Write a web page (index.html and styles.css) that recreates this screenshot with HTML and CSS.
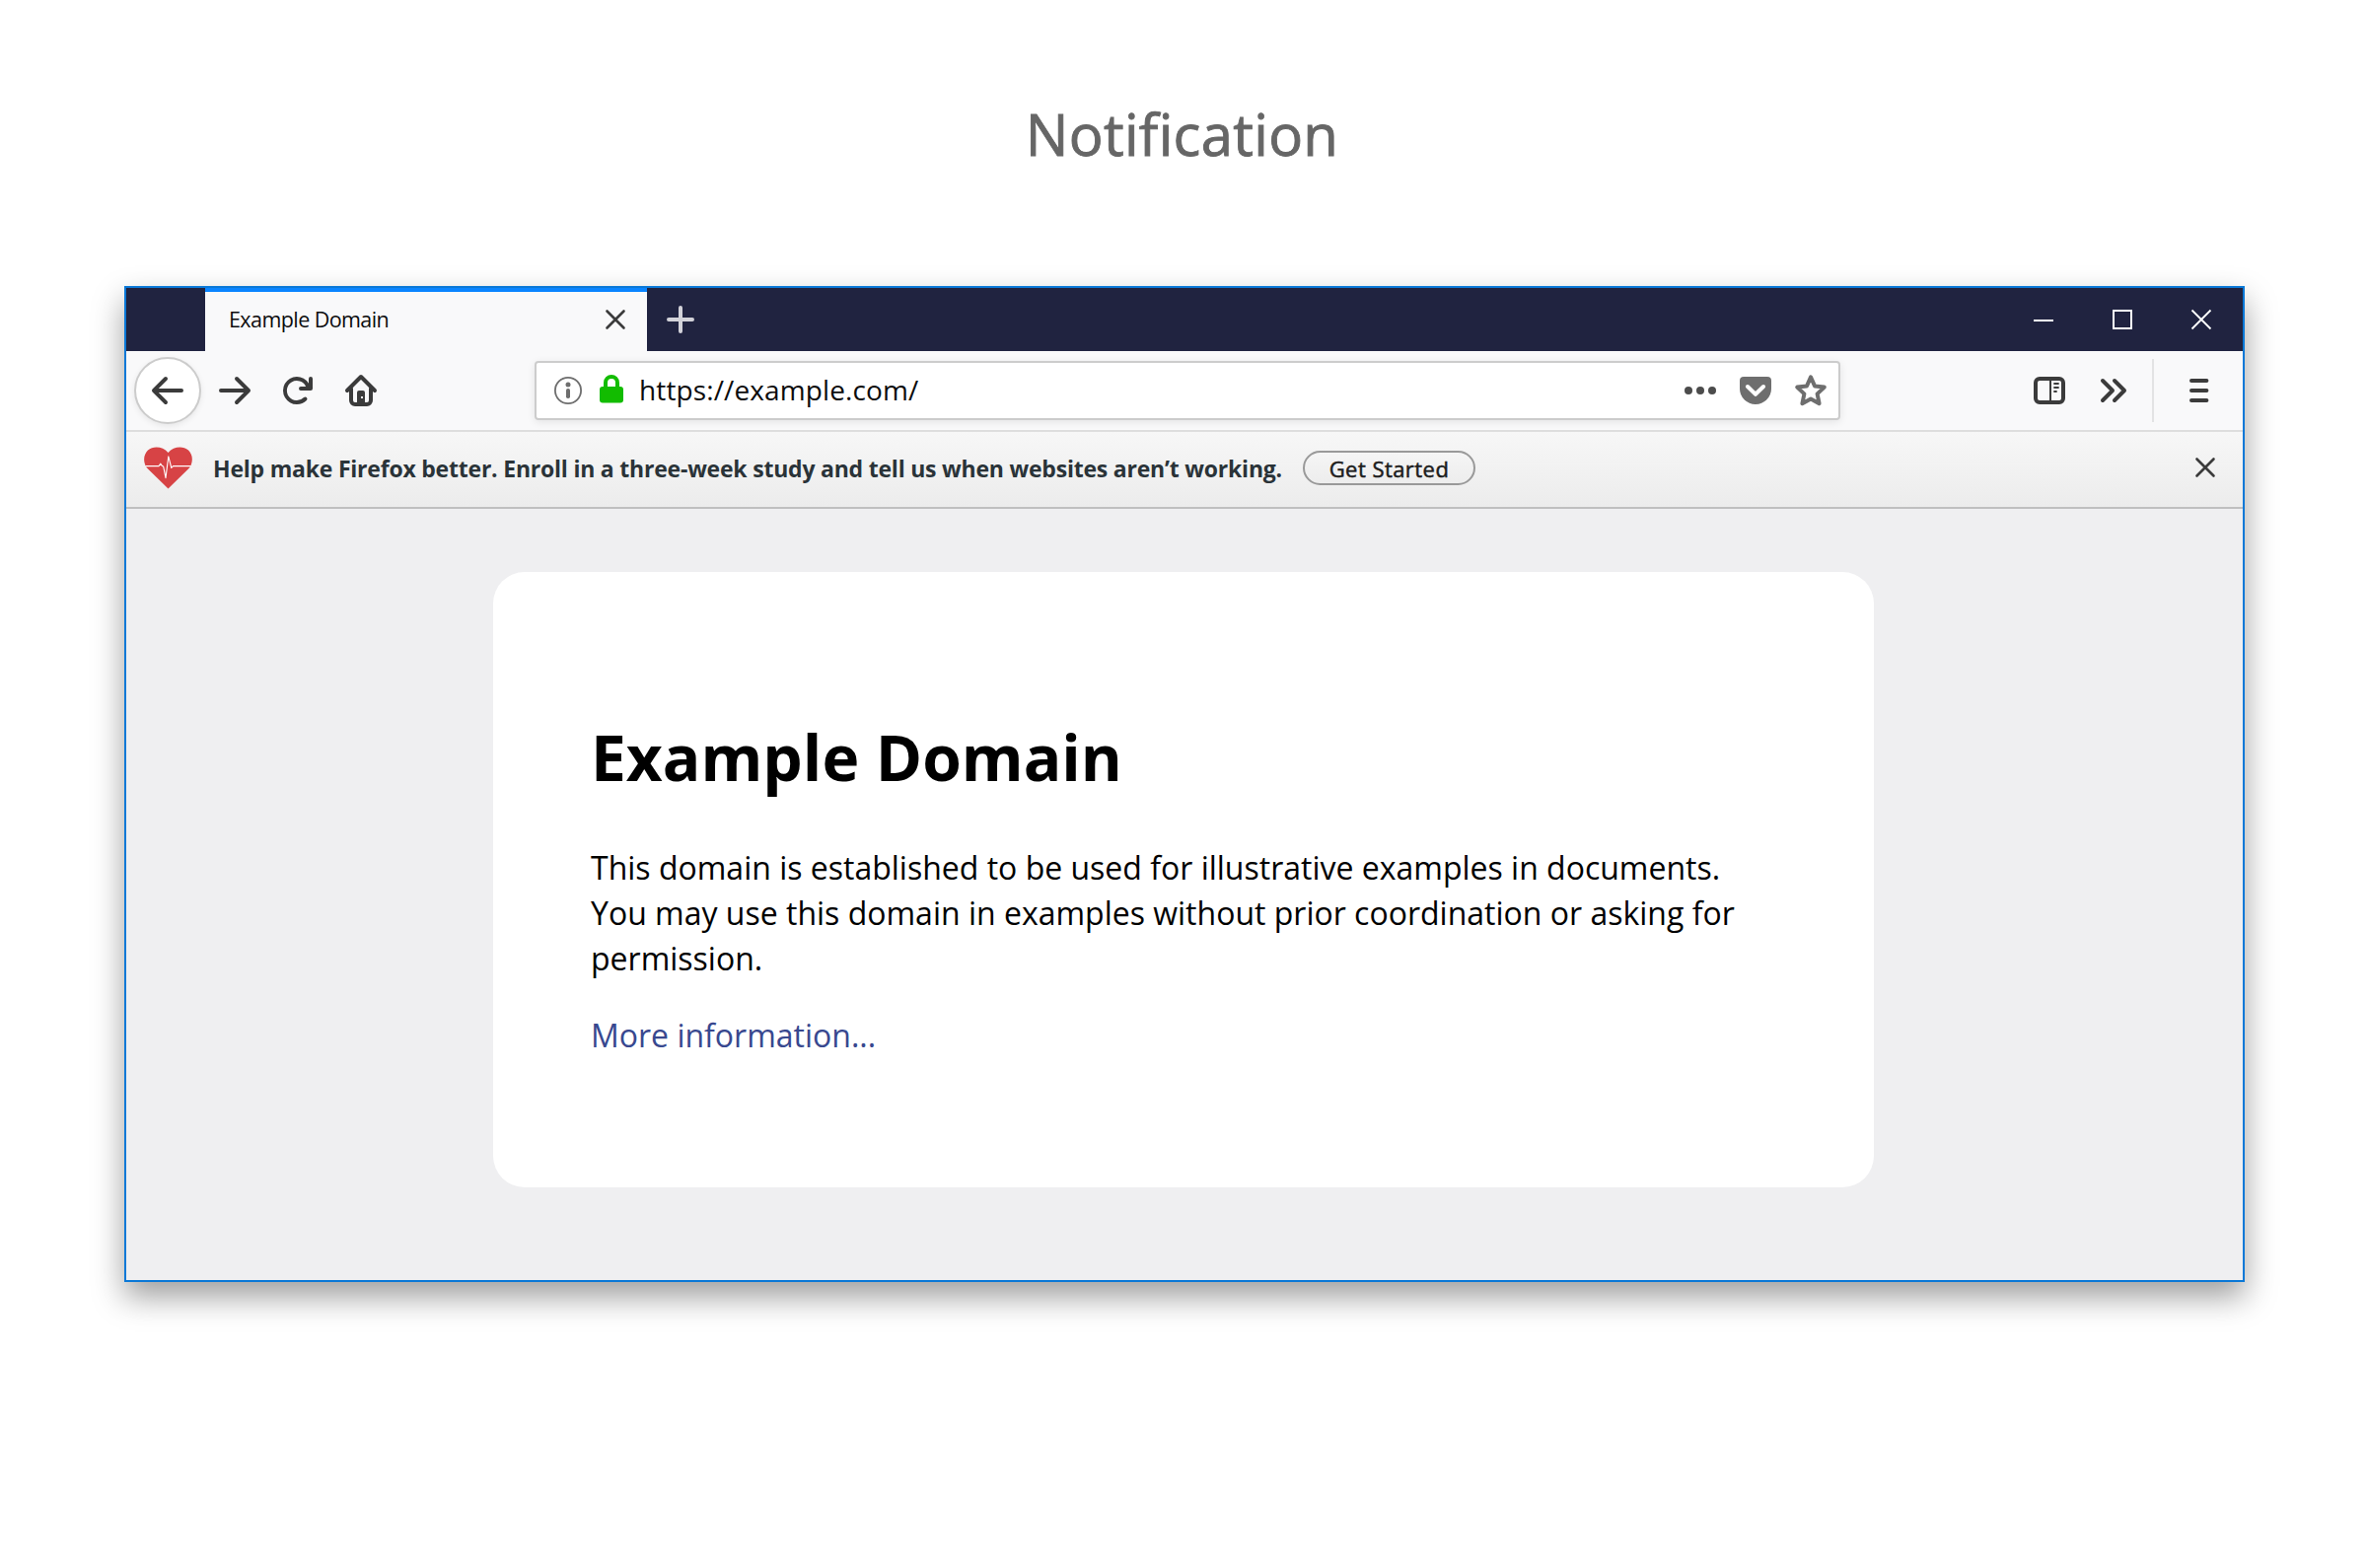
FILE: index.html
```html
<!DOCTYPE html>
<html lang="en">
<head>
<meta charset="utf-8">
<title>Notification</title>
<link rel="stylesheet" href="styles.css">
</head>
<body>
<header class="page-header"><h1 class="page-title">Notification</h1></header>
<main class="window">
  <div class="titlebar">
    <div class="tab">
      <span class="tab-label">Example Domain</span>
      <svg class="icon-close" viewBox="0 0 20 20"><path d="M1.5 1.5l17 17M18.5 1.5l-17 17"/></svg>
    </div>
    <svg class="new-tab" viewBox="0 0 28 28"><path d="M14 2v24M2 14h24"/></svg>
    <div class="window-controls">
      <svg viewBox="0 0 20 20"><path d="M0 11h20"/></svg>
      <svg viewBox="0 0 20 20"><path d="M1 1h18v18H1z"/></svg>
      <svg viewBox="0 0 20 20"><path d="M.5.5l19 19M19.5.5l-19 19"/></svg>
    </div>
  </div>
  <nav class="toolbar">
    <div class="back-button"><svg class="icon" viewBox="0 0 16 16"><path d="M15 7H3.414l4.293-4.293a1 1 0 0 0-1.414-1.414l-6 6a1 1 0 0 0 0 1.414l6 6a1 1 0 0 0 1.414-1.414L3.414 9H15a1 1 0 0 0 0-2z"/></svg></div>
    <div class="nav-icons">
      <svg class="icon" viewBox="0 0 16 16"><path d="M1 7h11.586L8.293 2.707a1 1 0 0 1 1.414-1.414l6 6a1 1 0 0 1 0 1.414l-6 6a1 1 0 0 1-1.414-1.414L12.586 9H1a1 1 0 0 1 0-2z"/></svg>
      <svg class="icon" viewBox=".5 0 16 16"><path d="M15 1a1 1 0 0 0-1 1v2.418A6.995 6.995 0 1 0 8 15a6.954 6.954 0 0 0 4.95-2.05 1 1 0 0 0-1.414-1.414A5.019 5.019 0 1 1 12.549 6H10a1 1 0 0 0 0 2h5a1 1 0 0 0 1-1V2a1 1 0 0 0-1-1z"/></svg>
      <svg class="icon" viewBox="0 0 16 16"><path class="line" d="M1 8l7-7 7 7M3 7v6a2 2 0 0 0 2 2h6a2 2 0 0 0 2-2V7"/><path fill-rule="evenodd" d="M7 8h2a1 1 0 0 1 1 1v6H6V9a1 1 0 0 1 1-1zm1 3v1h1v-1z"/></svg>
    </div>
    <div class="urlbar">
      <svg class="icon-info" viewBox="0 0 28 28"><circle cx="14" cy="14" r="13.1"/><circle class="solid" cx="14" cy="8" r="2.5"/><rect class="solid" x="12" y="12" width="4" height="10" rx="1.8"/></svg>
      <svg class="icon-lock" viewBox="0 0 24 29"><path class="shackle" d="M6 14V8a6 6 0 0 1 12 0v6"/><rect y="12" width="24" height="16.5" rx="3"/></svg>
      <span class="url">https://example.com/</span>
      <div class="page-actions">
        <svg class="icon dots" viewBox="0 0 16 16"><circle cx="2" cy="8" r="2"/><circle cx="8" cy="8" r="2"/><circle cx="14" cy="8" r="2"/></svg>
        <svg class="icon" viewBox="0 0 16 16"><path d="M2 1h12a2 2 0 0 1 2 2v4a8 8 0 0 1-16 0V3a2 2 0 0 1 2-2z"/><path class="check" d="M4 6l4 3.9L12 6"/></svg>
        <svg class="icon" viewBox="0 0 16 16"><path class="line" d="M8 1.2l2 4.5 4.9.6-3.6 3.4 1 4.9L8 12.2l-4.3 2.4 1-4.9-3.6-3.4L6 5.7z"/></svg>
      </div>
    </div>
    <div class="tools">
      <svg class="icon" viewBox="0 0 16 16"><rect class="line" x="1" y="2" width="14" height="12" rx="2"/><path d="M8 3h1v10H8z"/><path class="hair" d="M10.5 4.5h2M10.5 6.5h2M10.5 8.5h1"/></svg>
      <svg class="icon" viewBox="0 0 16 16"><path class="line" d="M2 3l5 5-5 5M8 3l5 5-5 5"/></svg>
    </div>
    <div class="menu"><svg class="icon" viewBox="0 0 16 16"><path class="line" d="M4 3h7.7M4 8h7.7M4 13h7.7"/></svg></div>
  </nav>
  <section class="notification">
    <svg class="heart" viewBox="0 0 49 43"><path d="M24.5 42.5L4 22.5C-1.3 17-1 8 4 3.4 9.5-1 19-.5 24.5 6 30-.5 39.500-1 45 3.4 50 8 50.300 17 45 22.5z"/><path class="pulse" d="M1.500 19.600H15l1.700-2.400 1.800 2.400 1.200.5 2.300 11.500L24.800 9.800 27.800 21.500l1.700-1.900h18"/></svg>
    <p class="message">Help make Firefox better. Enroll in a three-week study and tell us when websites aren’t working.</p>
    <button class="action" type="button">Get Started</button>
    <svg class="icon-close dismiss" viewBox="0 0 20 20"><path d="M1.5 1.5l17 17M18.5 1.5l-17 17"/></svg>
  </section>
  <div class="content">
    <article class="card">
      <h2 class="card-title">Example Domain</h2>
      <p class="card-text">This domain is established to be used for illustrative examples in documents.<br>You may use this domain in examples without prior coordination or asking for<br>permission.</p>
      <a class="card-link">More information...</a>
    </article>
  </div>
</main>
</body>
</html>
```
FILE: styles.css
```css
* { box-sizing: border-box; }
body {
  margin: 0;
  width: 2400px;
  height: 1590px;
  background: #fff;
  font-family: "Open Sans", "Noto Sans", sans-serif;
  overflow: hidden;
}
h1, h2, p { margin: 0; }
svg { display: block; flex: none; fill: none; overflow: visible; }
.page-header { height: 290px; padding: 96px 3px 0 0; text-align: center; }
.page-title {
  font-size: 58px;
  line-height: 80px;
  font-weight: 400;
  letter-spacing: .3px;
  color: #666;
  -webkit-text-stroke: .9px #666;
}
.window {
  width: 2150px;
  height: 1010px;
  margin-left: 126px;
  border: 2px solid #0a78d7;
  background: #efeff1;
  box-shadow: 0 15px 30px rgba(0, 0, 0, .38);
  display: flex;
  flex-direction: column;
}
.titlebar { height: 64px; background: #202340; display: flex; align-items: center; padding-left: 80px; }
.tab {
  width: 448px;
  height: 64px;
  padding: 0 22px 0 24px;
  background: #f9f9fa;
  box-shadow: inset 0 4px #0a84ff;
  display: flex;
  align-items: center;
  justify-content: space-between;
}
.tab-label { padding-bottom: 1px; font-size: 21.5px; letter-spacing: -.58px; color: #0c0c0d; white-space: nowrap; }
.icon-close { width: 20px; height: 20px; stroke: #3b3b3b; stroke-width: 2.6; stroke-linecap: round; }
.new-tab { width: 28px; height: 28px; margin-left: 20px; stroke: #d2d2d9; stroke-width: 4; stroke-linecap: round; }
.window-controls { display: flex; gap: 60px; margin-left: auto; padding-right: 32px; }
.window-controls svg { width: 20px; height: 20px; stroke: #fff; stroke-width: 2; }
.window-controls svg:last-child { stroke-width: 1.8; }
.toolbar {
  height: 82px;
  background: #f9f9fa;
  border-bottom: 2px solid #dedede;
  display: flex;
  align-items: center;
  padding-left: 8px;
}
.icon { width: 32px; height: 32px; fill: #3b3b3b; stroke: none; }
.icon .line { fill: none; stroke: #3b3b3b; stroke-width: 2; stroke-linecap: round; stroke-linejoin: round; }
.icon .hair { fill: none; stroke: #3b3b3b; stroke-width: .9; stroke-linecap: round; }
.back-button {
  width: 68px;
  height: 68px;
  border: 2px solid #ccc;
  border-radius: 50%;
  background: #fff;
  box-shadow: 0 2px 6px rgba(0, 0, 0, .08);
  display: flex;
  align-items: center;
  justify-content: center;
}
.nav-icons { display: flex; gap: 32px; margin-left: 18px; }
.urlbar {
  width: 1324px;
  height: 60px;
  margin-left: 160px;
  padding: 0 12px 0 18px;
  border: 2px solid #ccc;
  border-radius: 4px;
  background: #fff;
  box-shadow: 0 2px 8px rgba(0, 0, 0, .09);
  display: flex;
  align-items: center;
}
.icon-info { width: 28px; height: 28px; stroke: #6e6e6e; stroke-width: 1.8; }
.icon-info .solid { fill: #6e6e6e; stroke: none; }
.icon-lock { width: 24px; height: 29px; margin: -3px 16px 0 18px; fill: #12bc00; }
.icon-lock .shackle { fill: none; stroke: #12bc00; stroke-width: 4; }
.url { padding-bottom: 2px; font-size: 28px; letter-spacing: .12px; color: #0c0c0d; }
.page-actions { display: flex; gap: 24px; margin-left: auto; }
.page-actions .icon { fill: #6e6e6e; }
.page-actions .line { stroke: #6e6e6e; }
.page-actions .dots { fill: #4c4c4c; }
.page-actions .check { fill: none; stroke: #fff; stroke-width: 2; stroke-linecap: round; stroke-linejoin: round; }
.tools { display: flex; gap: 34px; margin-left: 196px; }
.menu { height: 64px; margin-left: 22px; padding-left: 30px; border-left: 2px solid #e3e3e4; display: flex; align-items: center; }
.notification {
  height: 78px;
  padding: 0 28px 4px 18px;
  background: linear-gradient(#f7f7f7, #ececec);
  border-bottom: 2px solid #bfbfbf;
  display: flex;
  align-items: center;
}
.heart { width: 49px; height: 43px; fill: #d74345; }
.heart .pulse { fill: none; stroke: #fff; stroke-width: 1.1; stroke-linejoin: round; }
.message {
  width: 1085px;
  margin-left: 21px;
  padding-top: 2px;
  font-size: 23px;
  font-weight: 700;
  letter-spacing: -.215px;
  color: #2a3338;
  white-space: nowrap;
}
.action {
  width: 175px;
  height: 35px;
  margin-left: 20px;
  padding: 1px 0 0;
  border: 2px solid #999;
  border-radius: 18px;
  background: linear-gradient(#f5f5f5, #ededed);
  font: 400 22px/30px "Open Sans", sans-serif;
  letter-spacing: .45px;
  color: #1c1c1c;
  -webkit-text-stroke: .5px #1c1c1c;
  white-space: nowrap;
}
.dismiss { margin-left: auto; }
.content { flex: 1; padding: 64px 0 0 372px; }
.card { width: 1400px; height: 624px; padding: 148px 99px 0; border-radius: 32px; background: #fff; color: #000; }
.card-title { font-size: 64px; line-height: 80px; font-weight: 700; white-space: nowrap; }
.card-text { margin-top: 49px; font-size: 32px; line-height: 46px; white-space: nowrap; }
.card-link { display: inline-block; margin-top: 32px; font-size: 32px; line-height: 46px; color: #38488f; }
```
